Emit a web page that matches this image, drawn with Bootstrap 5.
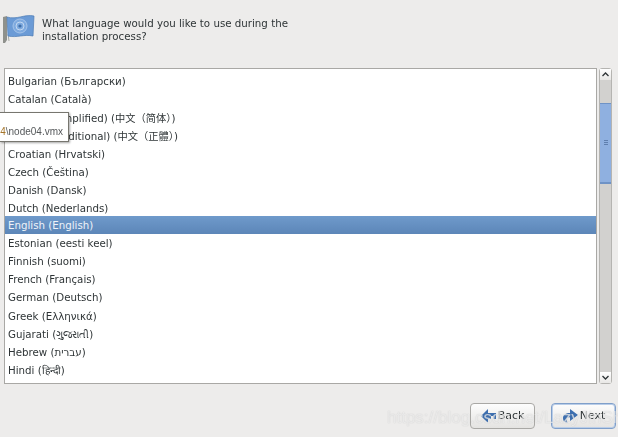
<!DOCTYPE html>
<html lang="en">
<head>
    <meta charset="UTF-8">
    <meta name="viewport" content="width=device-width, initial-scale=1.0">
    <title>Language</title>
    <link href="https://cdn.jsdelivr.net/npm/bootstrap@5.3.0/dist/css/bootstrap.min.css" rel="stylesheet">
    <script src="https://cdn.jsdelivr.net/npm/bootstrap@5.3.0/dist/js/bootstrap.bundle.min.js"></script>
    <style>
        html, body { height: 100%; }
        body { font-family: "DejaVu Sans", "Noto Sans CJK SC", sans-serif; font-size: 11px; background-color: #edeceb; color: #2e3436; overflow: hidden; }
        .page { position: relative; width: 618px; height: 437px; padding: 14px 2px 0 4px; filter: blur(.35px); }
        .head { height: 54px; gap: 8px; }
        .head-flag { width: 32px; height: 30px; flex: none; margin-left: -1px; }
        .head-text { font-size: 10.25px; line-height: 13.4px; padding-top: 3px; margin-left: -1px; }
        .lang-wrap { height: 317px; gap: 2px; }
        .lang-box { width: 594px; border: 1px solid #a9a8a5; border-radius: 0; background: #fff; overflow: hidden; padding-top: 3.5px; }
        .lang-box .list-group-item { border: 0; border-radius: 0; padding: 0 0 0 3px; height: 18.1px; line-height: 18px; font-size: 10.25px; color: #2e3436; background: transparent; white-space: nowrap; }
        .lang-box .list-group-item.active { background: linear-gradient(#6f9acb, #5c86b8); color: #eef3f9; }
        .scroll-track { width: 13px; margin-right: 4px; background: #d2d1cf; border: 1px solid #b5b4b1; border-radius: 3px; }
        .scroll-btn { height: 11px; background: linear-gradient(#fff, #e8e7e5); }
        .scroll-btn svg { display: block; margin: 3px auto 0; }
        .scroll-mid { flex: 1; padding-top: 23px; }
        .scroll-thumb { height: 81px; background: #8fb0e0; border-top: 1px solid #6f93c6; border-bottom: 2px solid #6f93c6; }
        .scroll-thumb i { display: block; width: 4px; height: 1px; background: #5f7fae; margin-bottom: 1px; }
        .foot { height: 53px; padding-top: 19px; gap: 16px; }
        .nav-btn { width: 65px; height: 26px; padding: 0; font-size: 11px; color: #2e3436; border: 1px solid #a9a8a5; border-radius: 4px; background: linear-gradient(#fdfdfd, #e4e3e1); gap: 2px; }
        .nav-btn.is-default { border-color: #7f9fca; box-shadow: inset 0 0 0 1px #b9cde8; }
        .tip { position: absolute; left: 0; top: 112px; width: 69px; height: 30px; background: #fff; border: 1px solid #77766f; border-left: 0; box-shadow: 1px 1px 2px rgba(0,0,0,.35); font-family: "Liberation Sans", sans-serif; font-size: 10px; color: #55585a; white-space: nowrap; padding: 0 5px 2px 0; }
        .tip b { font-weight: 400; color: #a5752a; }
        .mark-url { position: absolute; left: 387px; top: 408px; font-family: "Liberation Sans", sans-serif; font-size: 17px; line-height: 20px; color: rgba(255,255,255,.6); white-space: nowrap; pointer-events: none; text-shadow: 0 0 1px rgba(150,150,150,.5); }
    </style>
</head>
<body>
    <div class="page d-flex flex-column">
        <div class="head d-flex align-items-start">
            <svg class="head-flag" viewBox="0 0 32 30">
                <path d="M0 3l4-1v24l-2 3H0z" fill="#8f918c"/>
                <path d="M5 20l1 7" stroke="#a9aba6" stroke-width="1"/>
                <path d="M4 3c10 3 17-3 27-1l-1 20c-9-2-16 2-25 0z" fill="#6b9bd6" stroke="#4f7cb5" stroke-width=".7"/>
                <circle cx="17" cy="12" r="7" fill="#7eaadf" stroke="#a6c4e9" stroke-width="1"/>
                <circle cx="17" cy="12" r="4" fill="none" stroke="#c2d7f0" stroke-width="1"/>
                <circle cx="17" cy="12" r="1.6" fill="#3f6ea8"/>
            </svg>
            <div class="head-text">What language would you like to use during the<br>installation process?</div>
        </div>
        <div class="lang-wrap d-flex">
            <div class="lang-box list-group flex-fill">
                <div class="list-group-item">Bulgarian (Български)</div>
                <div class="list-group-item">Catalan (Català)</div>
                <div class="list-group-item">Chinese(Simplified) (中文（简体）)</div>
                <div class="list-group-item">Chinese(Traditional) (中文（正體）)</div>
                <div class="list-group-item">Croatian (Hrvatski)</div>
                <div class="list-group-item">Czech (Čeština)</div>
                <div class="list-group-item">Danish (Dansk)</div>
                <div class="list-group-item">Dutch (Nederlands)</div>
                <div class="list-group-item active">English (English)</div>
                <div class="list-group-item">Estonian (eesti keel)</div>
                <div class="list-group-item">Finnish (suomi)</div>
                <div class="list-group-item">French (Français)</div>
                <div class="list-group-item">German (Deutsch)</div>
                <div class="list-group-item">Greek (Ελληνικά)</div>
                <div class="list-group-item">Gujarati (ગુજરાતી)</div>
                <div class="list-group-item">Hebrew (עברית)</div>
                <div class="list-group-item">Hindi (हिन्दी)</div>
            </div>
            <div class="scroll-track d-flex flex-column">
                <div class="scroll-btn"><svg width="7" height="5" viewBox="0 0 7 5"><path d="M.5 4L3.5 1l3 3" fill="none" stroke="#2e3436" stroke-width="1.3"/></svg></div>
                <div class="scroll-mid">
                    <div class="scroll-thumb d-flex flex-column align-items-center justify-content-center"><i></i><i></i><i></i></div>
                </div>
                <div class="scroll-btn"><svg width="7" height="5" viewBox="0 0 7 5"><path d="M.5 1l3 3 3-3" fill="none" stroke="#2e3436" stroke-width="1.3"/></svg></div>
            </div>
        </div>
        <div class="foot d-flex justify-content-end align-items-start">
            <button class="btn nav-btn d-flex align-items-center justify-content-center">
                <svg width="15" height="14" viewBox="0 0 15 14"><path d="M7 0L0 7l7 7z" fill="#3d6fb0"/><path d="M7 4h8v6h-3V7h-2v3H7z" fill="#3d6fb0"/></svg>
                <span>Back</span>
            </button>
            <button class="btn nav-btn is-default d-flex align-items-center justify-content-center">
                <svg width="16" height="15" viewBox="0 0 16 15"><path d="M8 0l8 6-8 6V8.500C6 8 4.500 9 4.500 11c0 1 .5 2 1.500 3C3 14 1 12 1 9c0-3 3-5 7-5z" fill="#3d6fb0"/></svg>
                <span>Next</span>
            </button>
        </div>
        <div class="tip d-flex align-items-end justify-content-end"><span><b>4</b>\node04.vmx</span></div>
        <div class="mark-url">https://blog.csdn.net/LazyJinSh</div>
    </div>
</body>
</html>
